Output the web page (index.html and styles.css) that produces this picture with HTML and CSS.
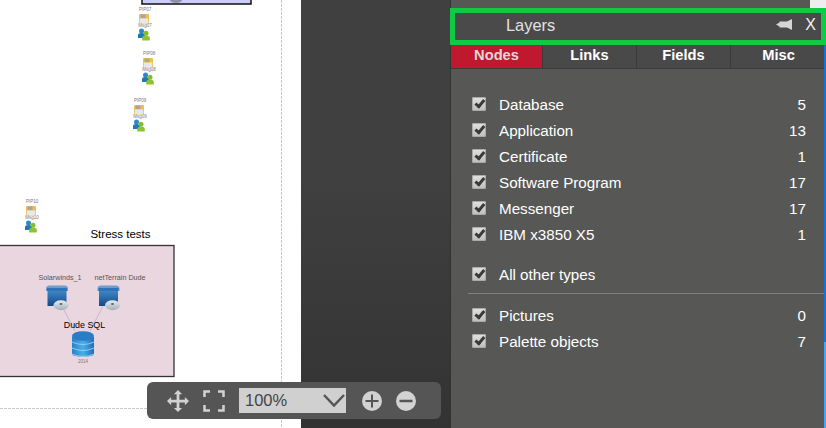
FILE: index.html
```html
<!DOCTYPE html>
<html lang="en">
<head>
<meta charset="utf-8">
<title>Layers</title>
<link rel="stylesheet" href="styles.css">
</head>
<body>
<div class="app">
  <main class="canvas">
    <svg class="diagram" width="301" height="428" viewBox="0 0 301 428">
      <defs>
        <linearGradient id="srv" x1="0" y1="0" x2="0" y2="1"><stop offset="0" stop-color="#3f86c6"/><stop offset="1" stop-color="#12498a"/></linearGradient>
        <linearGradient id="disc" x1="0" y1="0" x2="0" y2="1"><stop offset="0" stop-color="#e6ebef"/><stop offset="1" stop-color="#a5afb8"/></linearGradient>
        <linearGradient id="dbg" x1="0" y1="0" x2="1" y2="0"><stop offset="0" stop-color="#2a80c8"/><stop offset=".5" stop-color="#4aaee8"/><stop offset="1" stop-color="#1f6fb8"/></linearGradient>
        <g id="msg">
          <rect x="0" y="0" width="10" height="9.500" rx="1" fill="#f6bd4c"/>
          <rect x="1.500" y="0.500" width="5" height="3.500" fill="#a9a59a"/>
          <rect x="0.800" y="4.500" width="8.400" height="4.500" fill="#e4e9ef"/>
          <circle cx="2.500" cy="17" r="2.500" fill="#2a8ac4"/>
          <path d="M-1 24v-3q0-2 3.500-2t3.500 2v3z" fill="#1f78b4"/>
          <circle cx="7" cy="19.300" r="2.500" fill="#86bd2e"/>
          <path d="M3.200 26.500v-2.500q0-2.500 3.800-2.500t3.800 2.500v2.500z" fill="#8cc431"/>
        </g>
        <g id="server">
          <path d="M0 3.500q0-2.500 3-3h16q3 .5 3 3v2.500h-22z" fill="#6f9cc8"/>
          <rect x="1" y="3" width="20" height="3" fill="#2f74b8"/>
          <path d="M1.500 6h19v15h-19z" fill="url(#srv)"/>
          <ellipse cx="15" cy="20.200" rx="7.500" ry="5" fill="url(#disc)"/>
          <ellipse cx="15" cy="19" rx="1.500" ry="1" fill="#5a6570"/>
        </g>
      </defs>

      <path class="dash" d="M281.500 0V428M0 408.500H281"/>

      <rect x="142" y="-10" width="109" height="14" fill="#ccccfa" stroke="#111" stroke-width="1.500"/>
      <ellipse cx="176" cy="0" rx="6" ry="3" fill="#8f8fa8"/>

      <g transform="translate(139 14)"><text class="tiny" x="6" y="-3">PIP07</text><text class="tiny" x="6" y="13">Msg07</text><use href="#msg"/></g>
      <g transform="translate(143 58)"><text class="tiny" x="6" y="-3">PIP08</text><text class="tiny" x="6" y="13">Msg08</text><use href="#msg"/></g>
      <g transform="translate(134 105)"><text class="tiny" x="6" y="-3">PIP09</text><text class="tiny" x="6" y="13">Msg09</text><use href="#msg"/></g>
      <g transform="translate(26 206)"><text class="tiny" x="6" y="-3">PIP10</text><text class="tiny" x="6" y="13">Msg10</text><use href="#msg"/></g>

      <text class="group-title" x="120.500" y="238">Stress tests</text>
      <rect x="-2" y="245.500" width="176" height="131" fill="#ead6df" stroke="#333" stroke-width="1.300"/>
      <path d="M64 310L75 331M103 306L90 331" stroke="#c9b5cc" stroke-width="1" fill="none"/>
      <text class="node-label" x="60" y="280">Solarwinds_1</text>
      <text class="node-label" x="120" y="280">netTerrain Dude</text>
      <use href="#server" x="46" y="285"/>
      <use href="#server" x="97.500" y="285"/>
      <text class="node-title" x="84.500" y="328">Dude SQL</text>
      <g>
        <rect x="72" y="337" width="22" height="17" fill="url(#dbg)"/>
        <ellipse cx="83" cy="354" rx="11" ry="3" fill="url(#dbg)"/>
        <path class="db-line" d="M72 354q11 5 22 0M72 348q11 5 22 0M72 342q11 5 22 0"/>
        <ellipse cx="83" cy="336" rx="11" ry="4.800" fill="#2a7cc6"/>
      </g>
      <text class="tiny" x="83" y="362.500">2014</text>
    </svg>

    <div class="toolbar">
      <svg class="tool move" width="22" height="22" viewBox="0 0 24 24"><path d="M12 0l4.500 4.500h-3v6h6v-3L24 12l-4.500 4.500v-3h-6v6h3L12 24l-4.500-4.500h3v-6h-6v3L0 12l4.500-4.500v3h6v-6h-3z" fill="#d2d2d2"/></svg>
      <svg class="tool frame" width="22" height="22" viewBox="0 0 22 22"><path d="M1.500 7V1.500H7M15 1.500h5.500V7M20.500 15v5.500H15M7 20.500H1.500V15" fill="none" stroke="#d2d2d2" stroke-width="2.500"/></svg>
      <div class="zoom-select">
        <span>100%</span>
        <svg width="22" height="13" viewBox="0 0 22 13"><path d="M1 1l10 10.500L21 1" fill="none" stroke="#555" stroke-width="2.500"/></svg>
      </div>
      <svg class="tool plus" width="20" height="20" viewBox="0 0 20 20"><circle cx="10" cy="10" r="10" fill="#d2d2d2"/><path d="M10 3.500v13M3.500 10h13" stroke="#555" stroke-width="2"/></svg>
      <svg class="tool minus" width="20" height="20" viewBox="0 0 20 20"><circle cx="10" cy="10" r="10" fill="#d2d2d2"/><path d="M3.500 10h13" stroke="#555" stroke-width="2.500"/></svg>
    </div>
  </main>

  <div class="gutter"></div>

  <aside class="panel">
    <div class="corner"></div>
    <header class="panel-head">
      <h1>Layers</h1>
      <svg class="pin" width="16" height="11" viewBox="0 0 16 11"><path d="M0 5.500L3.500 3.500V2.500h7.500L16 0v11l-5-2.500H3.500V7.500z" fill="#d5d5d5"/></svg>
      <span class="close">X</span>
    </header>
    <nav class="tabs">
      <span class="tab active">Nodes</span>
      <span class="tab">Links</span>
      <span class="tab">Fields</span>
      <span class="tab">Misc</span>
    </nav>
    <section class="rows">
      <label class="row"><input type="checkbox" checked><span class="name">Database</span><span class="count">5</span></label>
      <label class="row"><input type="checkbox" checked><span class="name">Application</span><span class="count">13</span></label>
      <label class="row"><input type="checkbox" checked><span class="name">Certificate</span><span class="count">1</span></label>
      <label class="row"><input type="checkbox" checked><span class="name">Software Program</span><span class="count">17</span></label>
      <label class="row"><input type="checkbox" checked><span class="name">Messenger</span><span class="count">17</span></label>
      <label class="row"><input type="checkbox" checked><span class="name">IBM x3850 X5</span><span class="count">1</span></label>
      <label class="row other"><input type="checkbox" checked><span class="name">All other types</span></label>
      <hr class="rule">
      <label class="row"><input type="checkbox" checked><span class="name">Pictures</span><span class="count">0</span></label>
      <label class="row"><input type="checkbox" checked><span class="name">Palette objects</span><span class="count">7</span></label>
    </section>
    <div class="scrollbar"></div>
  </aside>
</div>
</body>
</html>
```

FILE: styles.css
```css
html, body {
  margin: 0;
  padding: 0;
  height: 100%;
  overflow: hidden;
  font-family: "Liberation Sans", Arial, sans-serif;
}

.app {
  display: flex;
  width: 826px;
  height: 428px;
  overflow: hidden;
}

/* Diagram canvas */
.canvas {
  position: relative;
  flex: 0 0 301px;
  background: #fff;
}

.diagram {
  display: block;
}

.dash {
  fill: none;
  stroke: #c8c8c8;
  stroke-width: 1;
  stroke-dasharray: 3 1;
}

.db-line {
  fill: none;
  stroke: #a5dcf8;
  stroke-width: 0.8;
}

.tiny {
  font-size: 4.5px;
  fill: #777;
  text-anchor: middle;
}

.group-title {
  font-size: 11.5px;
  fill: #000;
  text-anchor: middle;
}

.node-label {
  font-size: 7.2px;
  fill: #555;
  text-anchor: middle;
}

.node-title {
  font-size: 8.9px;
  fill: #000;
  text-anchor: middle;
}

/* Floating toolbar */
.toolbar {
  position: absolute;
  left: 147px;
  top: 382px;
  z-index: 2;
  display: flex;
  align-items: center;
  box-sizing: border-box;
  width: 294px;
  height: 37px;
  padding-left: 20px;
  border-radius: 6px;
  background: #555;
}

.tool {
  flex: none;
}

.frame {
  margin-left: 14px;
}

.zoom-select {
  display: flex;
  align-items: center;
  justify-content: space-between;
  box-sizing: border-box;
  width: 107px;
  height: 25px;
  margin-left: 14px;
  padding: 0 1px 0 6px;
  background: #d0d0d0;
  color: #444;
  font-size: 16.5px;
}

.plus {
  margin-left: 16px;
}

.minus {
  margin-left: 14px;
}

/* Dark gutter */
.gutter {
  flex: 0 0 149px;
  background: linear-gradient(#404040, #404040 40%, #333);
}

/* Layers panel */
.panel {
  position: relative;
  flex: 0 0 376px;
  box-sizing: border-box;
  padding-top: 8px;
  border-left: 1px solid #333;
  background: #575755;
  color: #fff;
}

.corner {
  position: absolute;
  top: 0;
  right: 0;
  width: 16px;
  height: 8px;
  background: #eee;
}

.panel-head {
  display: flex;
  align-items: center;
  box-sizing: border-box;
  height: 37px;
  margin-left: -1px;
  padding: 0 5px 0 51px;
  border: 5px solid #10c944;
  background: #4a4a4a;
  color: #e2e2e2;
}

.panel-head h1 {
  flex: 1;
  margin: 0 0 3px;
  font-size: 16.4px;
  font-weight: normal;
}

.pin {
  margin: 0 13px 5px 0;
}

.close {
  margin-bottom: 3px;
  color: #f2f2f2;
  font-size: 16px;
}

.tabs {
  display: grid;
  grid-template-columns: 92px 94px 94px 1fr;
  height: 24px;
  background: #494949;
  border-bottom: 1px solid #3a3a3a;
  box-sizing: border-box;
}

.tab {
  border-right: 1px solid #3a3a3a;
  font-size: 14.7px;
  font-weight: bold;
  line-height: 20px;
  text-align: center;
}

.tab:last-child {
  border-right: 0;
}

.tab.active {
  background: #c0192f;
  color: #e0d8d8;
}

.rows {
  padding: 22px 20px 0 21px;
}

.row {
  display: flex;
  align-items: center;
  height: 26px;
  font-size: 15.2px;
}

.row input {
  appearance: none;
  position: relative;
  flex: none;
  box-sizing: border-box;
  width: 13.500px;
  height: 13.500px;
  margin: 0 13.500px 0 0;
  border-radius: 2px;
  background: linear-gradient(#e2e2e2, #bdbdbd);
  box-shadow: inset 0 0 0 1px #aaa;
}

.row input::after {
  content: "";
  position: absolute;
  left: 2.500px;
  top: 2.500px;
  width: 6.500px;
  height: 3px;
  border-left: 3px solid #3a3a3a;
  border-bottom: 3px solid #3a3a3a;
  transform: rotate(-50deg);
}

.name {
  flex: 1;
}

.other {
  margin-top: 14px;
}

.rule {
  height: 1px;
  margin: 6px -20px 8px -4px;
  border: 0;
  background: #808080;
}

.scrollbar {
  position: absolute;
  top: 45px;
  right: 0;
  bottom: 0;
  width: 2px;
  background: linear-gradient(#1a6fd0, #1a6fd0 297px, #4aa3ee 297px);
}
```
